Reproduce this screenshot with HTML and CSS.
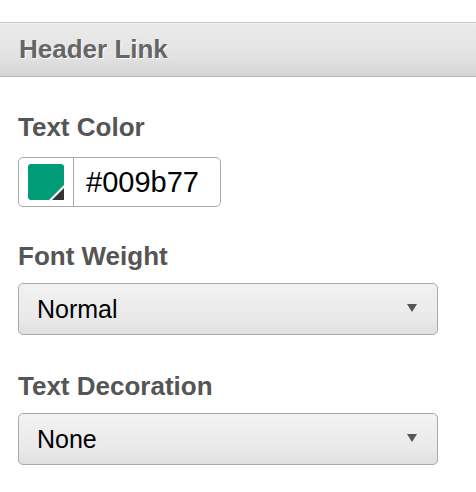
FILE: index.html
```html
<!DOCTYPE html>
<html>
<head>
<meta charset="utf-8">
<link rel="stylesheet" href="styles.css">
</head>
<body>
<div class="panel">
  <div class="section-header">Header Link</div>
  <div class="fields">
    <div class="field field-color">
      <div class="label">Text Color</div>
      <div class="color-input">
        <div class="swatch-wrap">
          <svg class="swatch" width="36" height="36" viewBox="0 0 36 36">
            <rect x="0" y="0" width="36" height="36" rx="3" ry="3" fill="#009b77"/>
            <polygon points="36,21 36,36 21,36" fill="#ffffff"/>
            <polygon points="36,24 36,36 24,36" fill="#333333"/>
          </svg>
        </div>
        <div class="color-value">#009b77</div>
      </div>
    </div>
    <div class="field field-select">
      <div class="label">Font Weight</div>
      <div class="select">
        <span class="select-value">Normal</span>
        <svg class="arrow" width="10" height="8" viewBox="0 0 10 8"><polygon points="0,0 10,0 5,8" fill="#555"/></svg>
      </div>
    </div>
    <div class="field field-select">
      <div class="label">Text Decoration</div>
      <div class="select">
        <span class="select-value">None</span>
        <svg class="arrow" width="10" height="8" viewBox="0 0 10 8"><polygon points="0,0 10,0 5,8" fill="#555"/></svg>
      </div>
    </div>
  </div>
</div>
</body>
</html>
```

FILE: styles.css
```css
html, body {
  margin: 0;
  padding: 0;
  background: #ffffff;
}

body {
  font-family: "Liberation Sans", Arial, Helvetica, sans-serif;
}

.panel {
  padding-top: 22px;
}

.section-header {
  height: 53px;
  box-sizing: content-box;
  border-top: 1px solid #c8c8c8;
  border-bottom: 1px solid #b9b9b9;
  background: linear-gradient(to bottom, #ebebeb 0%, #e3e3e3 60%, #d5d5d5 100%);
  box-shadow: inset 0 1px 0 #f3f3f3;
  padding-left: 19px;
  display: flex;
  align-items: center;
  font-weight: bold;
  font-size: 26px;
  color: #666666;
  text-shadow: 1px 1px 0 #ffffff;
}

.fields {
  padding: 35px 38px 0 18px;
  display: flex;
  flex-direction: column;
}

.field {
  display: flex;
  flex-direction: column;
}

.field-color {
  gap: 15px;
  margin-bottom: 34px;
}

.field-select {
  gap: 12px;
  margin-bottom: 36px;
}

.label {
  font-weight: bold;
  font-size: 26px;
  line-height: 30px;
  color: #555555;
}

.color-input {
  align-self: flex-start;
  display: flex;
  width: 201px;
  height: 48px;
  border: 1px solid #aaaaaa;
  border-radius: 5px;
  background: #ffffff;
}

.swatch-wrap {
  padding: 0 9px;
  display: flex;
  align-items: center;
  border-right: 1px solid #aaaaaa;
}

.swatch {
  display: block;
}

.color-value {
  display: flex;
  align-items: center;
  padding-left: 12px;
  font-size: 29px;
  color: #000000;
}

.select {
  height: 50px;
  border: 1px solid #aaaaaa;
  border-radius: 5px;
  background: linear-gradient(to bottom, #f2f2f2 0%, #e9e9e9 70%, #e0e0e0 100%);
  display: flex;
  align-items: center;
  justify-content: space-between;
  padding: 0 20px 0 18px;
}

.select-value {
  font-size: 25px;
  color: #000000;
}

.arrow {
  display: block;
  margin-top: -3px;
}
```
